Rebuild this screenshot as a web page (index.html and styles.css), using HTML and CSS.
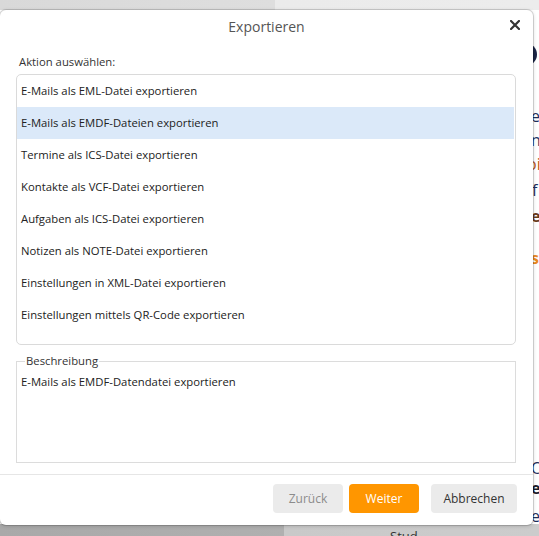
FILE: index.html
```html
<!DOCTYPE html>
<html lang="de">
<head>
<meta charset="utf-8">
<title>Exportieren</title>
<link rel="stylesheet" href="styles.css">
</head>
<body>
<div class="screen">
  <div class="backdrop" aria-hidden="true">
    <span class="frag circle"></span>
    <span class="frag f1">e</span>
    <span class="frag f2">n</span>
    <span class="frag f3">oi</span>
    <span class="frag f4">f</span>
    <span class="frag f5">e</span>
    <span class="frag f6">s</span>
    <span class="frag f7">O</span>
    <span class="frag f8">e</span>
    <span class="frag f9">e</span>
    <span class="frag f10">Stud</span>
  </div>

  <div class="dialog">
    <div class="header">
      <span></span>
      <div class="title">Exportieren</div>
      <button class="close" aria-label="Schließen">
        <svg width="10" height="10" viewBox="0 0 10 10"><path d="M1 1 L9 9 M9 1 L1 9" stroke="#333" stroke-width="2.2" stroke-linecap="square"/></svg>
      </button>
    </div>

    <div class="body">
      <div class="label">Aktion auswählen:</div>
      <div class="list">
        <div class="item">E-Mails als EML-Datei exportieren</div>
        <div class="item selected">E-Mails als EMDF-Dateien exportieren</div>
        <div class="item">Termine als ICS-Datei exportieren</div>
        <div class="item">Kontakte als VCF-Datei exportieren</div>
        <div class="item">Aufgaben als ICS-Datei exportieren</div>
        <div class="item">Notizen als NOTE-Datei exportieren</div>
        <div class="item">Einstellungen in XML-Datei exportieren</div>
        <div class="item">Einstellungen mittels QR-Code exportieren</div>
      </div>

      <fieldset class="desc">
        <legend>Beschreibung</legend>
        <div class="desc-text">E-Mails als EMDF-Datendatei exportieren</div>
      </fieldset>
    </div>

    <div class="footer">
      <button class="btn btn-back">Zurück</button>
      <button class="btn btn-next">Weiter</button>
      <button class="btn btn-cancel">Abbrechen</button>
    </div>
  </div>
</div>
</body>
</html>
```

FILE: styles.css
```css
html, body {
  margin: 0;
  padding: 0;
}

body {
  font-family: "Open Sans", "Noto Sans", sans-serif;
  color: #333;
  overflow: hidden;
}

.screen {
  position: relative;
  width: 539px;
  height: 536px;
  overflow: hidden;
  background:
    linear-gradient(to right, #d9d9d9 0, #dedede 275px, #ebebeb 275px, #ececec 539px) top left / 539px 10px no-repeat,
    linear-gradient(to right, #a9a9a9 0, #b0b0b0 284px, #c9c9c9 284px, #cccccc 539px) bottom left / 539px 12px no-repeat,
    #ffffff;
}

.backdrop {
  position: absolute;
  inset: 0;
}

.frag {
  position: absolute;
  left: 531px;
  font-size: 16px;
  line-height: 20px;
  color: #1f2f5c;
}

.circle {
  left: 513px;
  top: 43px;
  width: 24px;
  height: 23px;
  border-radius: 50%;
  background: #1c2647;
}

.f1 { top: 106px; }
.f2 { top: 130px; color: #2a3a6a; }
.f3 { top: 154px; left: 527px; color: #b5541c; }
.f4 { top: 180px; left: 532px; }
.f5 { top: 206px; font-weight: 700; color: #6a3a1a; }
.f6 { top: 248px; color: #ea8a1f; font-weight: 700; }
.f7 { top: 458px; left: 531px; }
.f8 { top: 478px; font-weight: 700; color: #1a1a2a; }
.f9 { top: 506px; }
.f10 { top: 526px; left: 390px; font-size: 13px; color: #333; }

.dialog {
  position: relative;
  z-index: 1;
  margin-top: 10px;
  width: 533px;
  height: 515px;
  background: #fff;
  border-radius: 6px;
  box-shadow: 0 0 0 1px rgba(0, 0, 0, 0.14), 0 1px 4px rgba(0, 0, 0, 0.18);
  display: flex;
  flex-direction: column;
}

.header {
  height: 34px;
  display: grid;
  grid-template-columns: 1fr auto 1fr;
}

.title {
  line-height: 34px;
  font-size: 14px;
  color: #555;
}

.close {
  justify-self: end;
  align-self: start;
  margin: 10px 13px 0 0;
  width: 10px;
  height: 10px;
  padding: 0;
  border: 0;
  background: none;
  display: flex;
}

.body {
  padding: 0 17px 0 16px;
  font-size: 11.3px;
}

.label {
  margin-top: 10px;
  margin-bottom: 4px;
  line-height: 16px;
  padding-left: 3px;
  color: #333;
}

.list {
  box-sizing: border-box;
  height: 271px;
  border: 1px solid #dadada;
  border-radius: 5px;
  padding: 0 1px 0 0;
}

.item {
  height: 32px;
  line-height: 32px;
  padding-left: 4px;
  color: #222;
  white-space: nowrap;
}

.item.selected {
  background: #dbe9f9;
}

.desc {
  margin: 8px 0 0 0;
  padding: 0 0 0 4px;
  border: 1px solid #dcdcdc;
  border-radius: 0;
}

.desc legend {
  margin-left: 4px;
  padding: 0 1px;
  line-height: 16px;
  color: #333;
}

.desc-text {
  margin-top: 5px;
  height: 88px;
  line-height: 16px;
  color: #222;
}

.footer {
  margin-top: 11px;
  border-top: 1px solid #e6e6e6;
  padding: 9px 16px 12px 0;
  display: flex;
  justify-content: flex-end;
}

.btn {
  height: 29px;
  border: 0;
  border-radius: 4px;
  font-family: "Open Sans", "Noto Sans", sans-serif;
  font-size: 12px;
  padding: 0;
}

.btn-back {
  width: 70px;
  background: #ebebeb;
  color: #8c8c8c;
}

.btn-next {
  width: 70px;
  margin-left: 6px;
  background: #ff9600;
  color: #fff;
}

.btn-cancel {
  width: 86px;
  margin-left: 12px;
  background: #ebebeb;
  color: #333;
}
```
